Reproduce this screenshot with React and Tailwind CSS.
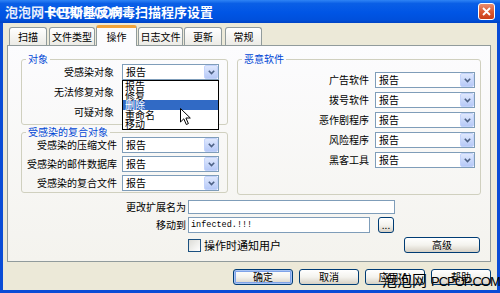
import React from "react";

const cjk = "[font-family:'Noto_Sans_CJK_SC','Noto_Sans',sans-serif]";

function Chevron() {
  return (
    <svg width="7" height="5" viewBox="0 0 7 5">
      <path d="M0.8 0.8 L3.5 3.6 L6.2 0.8" fill="none" stroke="#4d6185" strokeWidth="1.6" />
    </svg>
  );
}

function Select({ width = "w-[97px]", children }) {
  return (
    <div className={`${width} h-[16px] shrink-0 border border-[#7f9db9] bg-white flex items-center relative`}>
      <span className="flex-1 pl-[3px] text-[10px] leading-none text-black">报告</span>
      <div className="w-[14px] h-[14px] rounded-[2px] bg-linear-to-b from-[#dfe8fd] to-[#b6c9f7] border border-[#c3d3fb] flex items-center justify-center">
        <Chevron />
      </div>
      {children}
    </div>
  );
}

function Row({ label, width, gap, hideSelect, children }) {
  return (
    <div className="flex items-center h-[16px]">
      <span className={`flex-1 text-right text-[10px] leading-none text-black ${gap}`}>{label}</span>
      {hideSelect ? <div className={`${width} h-[16px]`} /> : <Select width={width}>{children}</Select>}
    </div>
  );
}

function Group({ title, className, children }) {
  return (
    <fieldset className={`border border-[#d0d0bf] rounded-[3px] ${className}`}>
      <legend className="ml-[4px] px-[2px] text-[10px] leading-[12px] text-[#0046d5]">{title}</legend>
      {children}
    </fieldset>
  );
}

function XpButton({ children, focus, className = "" }) {
  return (
    <div
      className={`h-[16px] rounded-[3px] border border-[#003c74] bg-linear-to-b from-white via-[#f4f3ee] to-[#d6d0c5] flex items-center justify-center text-[10px] leading-none text-black ${
        focus ? "shadow-[inset_0_0_0_1px_#a8c4f4,inset_0_0_0_2px_#7fa3e8]" : ""
      } ${className}`}
    >
      {children}
    </div>
  );
}

function Dropdown() {
  const items = ["报告", "修复", "删除", "重命名", "移动"];
  return (
    <div className="absolute left-[-1px] top-[15px] w-[97px] border border-black bg-white z-10">
      {items.map((it) => (
        <div
          key={it}
          className={`h-[9.6px] pl-[2px] text-[10px] leading-[9.6px] ${
            it === "删除" ? "bg-[#316ac5] text-white" : "text-black"
          }`}
        >
          {it}
        </div>
      ))}
      <svg className="absolute left-[57px] top-[27px]" width="12" height="18" viewBox="0 0 12 18">
        <path d="M0.5 0.5 L0.5 14 L3.8 10.8 L6.3 16.5 L8.4 15.6 L5.9 10 L10.3 10 Z" fill="white" stroke="black" strokeWidth="1" />
      </svg>
    </div>
  );
}

export default function App() {
  const tabs = [
    { name: "扫描", w: "w-[38px]", mr: "mr-[2px]" },
    { name: "文件类型", w: "w-[46px]", mr: "mr-[1px]" },
    { name: "操作", w: "w-[41px]", mr: "mr-[1px]", active: true },
    { name: "日志文件", w: "w-[45px]", mr: "mr-[1px]" },
    { name: "更新", w: "w-[38px]", mr: "mr-[3px]" },
    { name: "常规", w: "w-[37px]", mr: "" },
  ];

  return (
    <div className={`w-[500px] h-[293px] flex flex-col overflow-hidden relative bg-[#0a4cd6] ${cjk}`}>
      {/* title bar */}
      <div className="h-[23px] shrink-0 relative flex items-center bg-[linear-gradient(180deg,#2f84f5_0%,#0a5fe6_15%,#0055e5_55%,#0050dc_85%,#0043c4_100%)]">
        <span className="ml-[44px] text-[13px] font-bold text-white leading-none">卡巴斯基反病毒扫描程序设置</span>
        <span className="absolute left-[5px] top-[5px] text-[13px] font-bold text-white leading-none opacity-90">
          泡泡网 PCPOP.COM
        </span>
        <div className="ml-auto mr-[5px] w-[17px] h-[17px] rounded-[3px] border border-white bg-linear-to-b from-[#e98d70] via-[#dc5a32] to-[#c93d17] flex items-center justify-center">
          <svg width="9" height="9" viewBox="0 0 9 9">
            <path d="M1 1 L8 8 M8 1 L1 8" stroke="white" strokeWidth="1.8" />
          </svg>
        </div>
      </div>

      {/* body */}
      <div className="flex-1 mx-[3px] mb-[3px] bg-[#ece9d8] flex flex-col pl-[4px] pr-[6px]">
        {/* tabs */}
        <div className="h-[22px] flex items-end pl-[2px] relative z-10">
          {tabs.map((t) =>
            t.active ? (
              <div
                key={t.name}
                className={`${t.w} ${t.mr} h-[21px] mb-[-1px] rounded-t-[3px] border-x border-[#919b9c] border-t-[3px] border-t-[#f1a33b] bg-[#fcfcfe] flex items-center justify-center text-[10px] leading-none text-black`}
              >
                {t.name}
              </div>
            ) : (
              <div
                key={t.name}
                className={`${t.w} ${t.mr} h-[18px] rounded-t-[3px] border border-b-0 border-[#919b9c] bg-linear-to-b from-white to-[#ecebe6] flex items-center justify-center text-[10px] leading-none text-black`}
              >
                {t.name}
              </div>
            )
          )}
        </div>

        {/* panel */}
        <div className="h-[217px] shrink-0 border border-[#919b9c] bg-linear-to-b from-[#fcfcfe] to-[#f4f3ee] flex flex-col pt-[7px]">
          <div className="flex">
            <div className="ml-[13px] w-[207px] flex flex-col">
              <Group title="对象" className="h-[72px] pr-[8px] pb-[4px]">
                <div className="flex flex-col gap-[4px] mt-[-1px]">
                  <Row label="受感染对象" width="w-[97px]" gap="pr-[8px]">
                    <Dropdown />
                  </Row>
                  <Row label="无法修复对象" width="w-[97px]" gap="pr-[8px]" hideSelect />
                  <Row label="可疑对象" width="w-[97px]" gap="pr-[8px]" hideSelect />
                </div>
              </Group>
              <Group title="受感染的复合对象" className="mt-[1px] h-[67px] pr-[8px]">
                <div className="flex flex-col gap-[3px] mt-[-1px]">
                  <Row label="受感染的压缩文件" width="w-[97px]" gap="pr-[5px]" />
                  <Row label="受感染的邮件数据库" width="w-[97px]" gap="pr-[5px]" />
                  <Row label="受感染的复合文件" width="w-[97px]" gap="pr-[5px]" />
                </div>
              </Group>
            </div>

            <Group title="恶意软件" className="ml-[9px] w-[244px] h-[142px] pr-[5px]">
              <div className="flex flex-col gap-[4px] pt-[7px]">
                <Row label="广告软件" width="w-[100px]" gap="pr-[6px]" />
                <Row label="拨号软件" width="w-[100px]" gap="pr-[6px]" />
                <Row label="恶作剧程序" width="w-[100px]" gap="pr-[6px]" />
                <Row label="风险程序" width="w-[100px]" gap="pr-[6px]" />
                <Row label="黑客工具" width="w-[100px]" gap="pr-[6px]" />
              </div>
            </Group>
          </div>

          {/* lower fields */}
          <div className="mt-[5px] flex flex-col">
            <div className="flex items-center h-[14px]">
              <span className="w-[178px] text-right text-[10px] leading-none text-black">更改扩展名为</span>
              <div className="ml-[2px] w-[207px] h-[14px] border border-[#7f9db9] bg-white" />
            </div>
            <div className="flex items-center h-[16px] mt-[3px]">
              <span className="w-[178px] text-right text-[10px] leading-none text-black">移动到</span>
              <div className="ml-[2px] w-[182px] h-[16px] border border-[#7f9db9] bg-white flex items-center pl-[2px] [font-family:'Liberation_Mono',monospace] text-[8.5px] leading-none text-black">
                infected.!!!
              </div>
              <XpButton className="ml-[8px] w-[16px] h-[15px] items-end pb-[2px]">...</XpButton>
            </div>
            <div className="flex items-center h-[16px] mt-[4px]">
              <div className="ml-[180px] w-[13px] h-[13px] border border-[#1c5180] bg-linear-to-br from-[#dcdcd7] to-white" />
              <span className="ml-[3px] text-[11px] leading-none text-black">操作时通知用户</span>
              <XpButton className="ml-auto mr-[10px] w-[76px]">高级</XpButton>
            </div>
          </div>
        </div>

        {/* dialog buttons */}
        <div className="mt-[7px] flex justify-end gap-[6px]">
          <XpButton focus className="w-[60px]">确定</XpButton>
          <XpButton className="w-[60px]">取消</XpButton>
          <XpButton className="w-[60px]">应用(A)</XpButton>
          <XpButton className="w-[60px]">帮助</XpButton>
        </div>
      </div>

      <div className="absolute left-[382px] top-[272px] flex items-baseline text-black leading-none">
        <span className="text-[15px]">泡泡网</span>
        <span className="ml-[4px] [font-family:'Liberation_Sans',sans-serif] text-[13px] tracking-[-1px]">PCPOP.COM</span>
      </div>
    </div>
  );
}
